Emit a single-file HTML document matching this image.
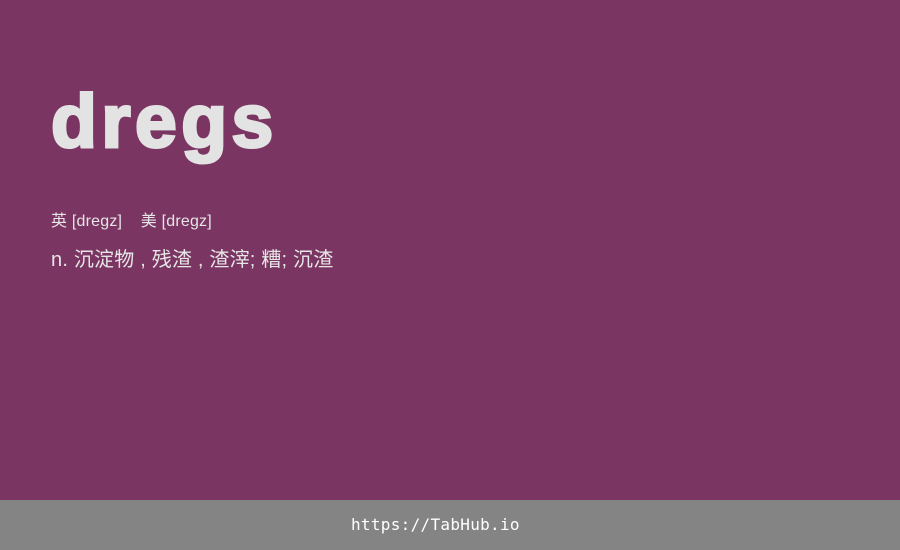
<!DOCTYPE html>
<html><head><meta charset="utf-8"><style>
html,body{margin:0;padding:0}
body{width:900px;height:550px;background:#7b3562;position:relative;overflow:hidden;font-family:"Liberation Sans","Noto Sans CJK SC",sans-serif;color:#e6e6e6}
.t{position:absolute;left:51px;top:71px;font-family:"Liberation Sans",Arial,sans-serif;font-size:75px;font-weight:bold;letter-spacing:4.5px;line-height:100px;color:#e3e3e3;-webkit-text-stroke:3px #e3e3e3}
.p{position:absolute;left:51px;top:212px;font-size:16px;letter-spacing:0.2px;line-height:20px;white-space:pre}
.d{position:absolute;left:51px;top:248px;font-size:20px;letter-spacing:0.2px;line-height:24px;white-space:pre}
.f{position:absolute;left:0;top:500px;width:900px;height:50px;background:#848484}
.f span{position:absolute;left:351px;top:0;color:#fff;font-family:"DejaVu Sans Mono","Liberation Mono",monospace;font-size:16px;letter-spacing:0.3px;line-height:50px}
</style></head><body>
<div class="t">dregs</div>
<div class="p">英 [dregz]    美 [dregz]</div>
<div class="d">n. 沉淀物 , 残渣 , 渣滓; 糟; 沉渣</div>
<div class="f"><span>https://TabHub.io</span></div>
</body></html>
